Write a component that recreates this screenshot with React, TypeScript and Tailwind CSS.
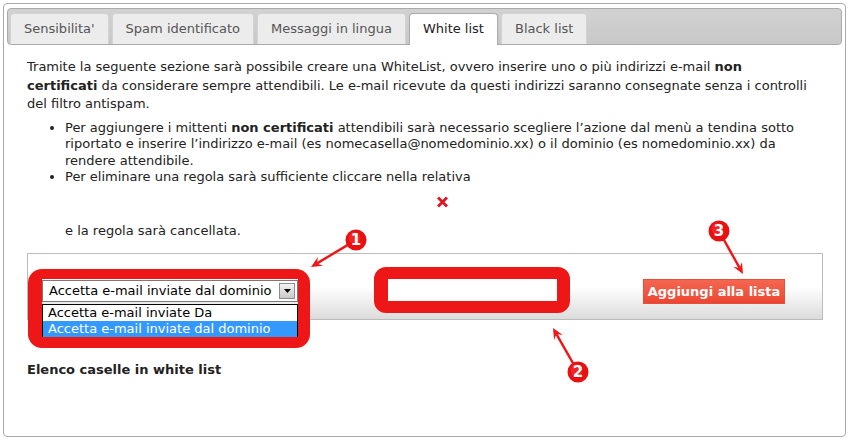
import React from 'react';

const tabs = ["Sensibilita'", 'Spam identificato', 'Messaggi in lingua', 'White list', 'Black list'];

// arrow from a numbered circle to its tip
function arrowPath(cx: number, cy: number, r: number, tx: number, ty: number) {
  const dx = tx - cx;
  const dy = ty - cy;
  const len = Math.sqrt(dx * dx + dy * dy);
  const ux = dx / len;
  const uy = dy / len;
  const sx = cx + ux * (r - 1);
  const sy = cy + uy * (r - 1);
  const nx = tx - ux * 7;
  const ny = ty - uy * 7;
  const bx = tx - ux * 11;
  const by = ty - uy * 11;
  const px = -uy * 5;
  const py = ux * 5;
  return {
    line: `M${sx} ${sy} L${nx} ${ny}`,
    head: `M${tx} ${ty} L${bx + px} ${by + py} L${nx} ${ny} L${bx - px} ${by - py} Z`,
  };
}

function Marker({ n, cx, cy, tx, ty }: { n: string; cx: number; cy: number; tx: number; ty: number }) {
  const a = arrowPath(cx, cy, 10, tx, ty);
  return (
    <g>
      <path d={a.line} stroke='#ee1717' strokeWidth='2.4' fill='none' />
      <path d={a.head} fill='#ee1717' />
      <circle cx={cx} cy={cy} r='10.5' fill='#e81010' />
      <circle cx={cx - 1.5} cy={cy - 2} r='6' fill='#ff4a4a' opacity='0.35' />
      <text
        x={cx}
        y={cy + 5}
        textAnchor='middle'
        fontSize='15'
        fontWeight='bold'
        fill='#fff'
        fontFamily='Verdana, DejaVu Sans, sans-serif'
      >
        {n}
      </text>
    </g>
  );
}

export default function App() {
  return (
    <div className="relative w-[849px] h-[445px] overflow-hidden bg-white pl-[3px] pt-[3px] font-[Verdana,'DejaVu_Sans',sans-serif] text-[13px] text-[#222]">
      <div className='h-[434px] w-[843px] rounded-[4px] border border-[#aaaaaa] px-[3px] pt-[4px]'>
        {/* tabs */}
        <div className='flex h-[37px] items-end gap-[3px] rounded-[4px] border border-[#aaaaaa] bg-linear-to-b from-[#d2d2d2] to-[#c8c8c8] pl-[2px]'>
          {tabs.map((t) =>
            t === 'White list' ? (
              <div
                key={t}
                className='-mb-px flex h-[32px] items-center rounded-t-[4px] border border-b-0 border-[#aaaaaa] bg-white px-[13px] pb-[1px] text-[#212121]'
              >
                {t}
              </div>
            ) : (
              <div
                key={t}
                className='flex h-[31px] items-center rounded-t-[4px] border border-b-0 border-[#d3d3d3] bg-[#ececec] px-[13px] text-[#555555]'
              >
                {t}
              </div>
            ),
          )}
        </div>

        {/* panel */}
        <div className='w-[822px] pl-[20px] pt-[13px]'>
          <p className='whitespace-nowrap leading-[18.5px]'>
            Tramite la seguente sezione sarà possibile creare una WhiteList, ovvero inserire uno o più indirizzi e-mail <b>non</b>
            <br />
            <b>certificati</b> da considerare sempre attendibili. Le e-mail ricevute da questi indirizzi saranno consegnate
            senza i controlli
            <br />
            del filtro antispam.
          </p>
          <ul className='mt-[6px] list-disc pl-[38px] leading-[16.5px]'>
            <li>
              Per aggiungere i mittenti <b>non certificati</b> attendibili sarà necessario scegliere l’azione dal menù a
              tendina sotto riportato e inserire l’indirizzo e-mail (es nomecasella@nomedominio.xx) o il dominio (es
              nomedominio.xx) da rendere attendibile.
            </li>
            <li>Per eliminare una regola sarà sufficiente cliccare nella relativa</li>
          </ul>
          <div className='ml-[409px] mt-[10px] h-[12px] w-[13px]'>
            <svg width='13' height='12' viewBox='0 0 13 12'>
              <path d='M2 1.5 L11 10.5 M11 1.5 L2 10.5' stroke='#e3141e' strokeWidth='2.8' />
            </svg>
          </div>
          <div className='mt-[15px] pl-[38px] leading-[16.5px]'>e la regola sarà cancellata.</div>

          {/* form */}
          <div className='mt-[14px] flex h-[67px] w-[796px] items-center border border-[#bbbbbb] bg-linear-to-b from-white from-50% to-[#dcdcdc] pl-[14px] pt-[8px]'>
            <div className='relative'>
              <div className='relative flex h-[22px] w-[256px] items-center border border-[#7a7a7a] bg-white pl-[6px] text-black'>
                Accetta e-mail inviate dal dominio
                <div className='absolute right-[2px] top-[2px] flex h-[16px] w-[16px] items-center justify-center border border-[#8c8c8c] bg-linear-to-b from-[#f4f4f4] to-[#c9c9c9]'>
                  <svg width='7' height='4' viewBox='0 0 7 4'>
                    <path d='M0 0 L7 0 L3.5 4 Z' fill='#000' />
                  </svg>
                </div>
              </div>
              <div className='absolute left-0 top-[24px] z-10 w-[256px] border border-black bg-white text-black'>
                <div className='flex h-[16px] items-center pl-[5px]'>Accetta e-mail inviate Da</div>
                <div className='flex h-[16px] items-center bg-[#3399ff] pl-[5px] text-white'>
                  Accetta e-mail inviate dal dominio
                </div>
              </div>
            </div>
            <input className='ml-[90px] h-[22px] w-[169px] bg-white outline-none' />
            <button className='ml-[86px] mt-[2px] h-[25px] w-[142px] border border-[#e4503c] bg-linear-to-b from-[#f46650] to-[#ec4632] text-[13px] font-bold text-white'>
              Aggiungi alla lista
            </button>
          </div>

          <div className='mt-[42px] font-bold leading-[16.5px]'>Elenco caselle in white list</div>
        </div>
      </div>

      {/* annotations */}
      <svg className='pointer-events-none absolute left-0 top-0 z-20' width='849' height='445' viewBox='0 0 849 445'>
        <path
          fillRule='evenodd'
          fill='#ee1717'
          d='M42 269 H296 A14 14 0 0 1 310 283 V334 A14 14 0 0 1 296 348 H42 A14 14 0 0 1 28 334 V283 A14 14 0 0 1 42 269 Z M42 279 V337 H298 V279 Z'
        />
        <path
          fillRule='evenodd'
          fill='#ee1717'
          d='M386 267 H558 A12 12 0 0 1 570 279 V301 A12 12 0 0 1 558 313 H386 A12 12 0 0 1 374 301 V279 A12 12 0 0 1 386 267 Z M388 279 V301 H557 V279 Z'
        />
        <Marker n='1' cx={356} cy={240} tx={311} ty={267} />
        <Marker n='3' cx={719} cy={231} tx={743} ty={274} />
        <Marker n='2' cx={578} cy={372} tx={553} ty={328} />
      </svg>
    </div>
  );
}
